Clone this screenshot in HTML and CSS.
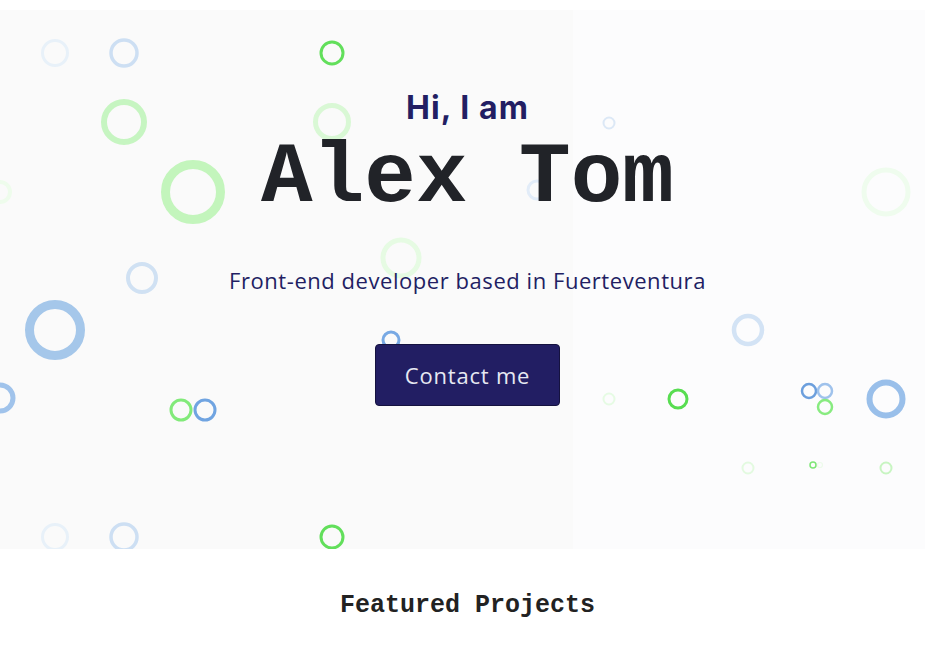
FILE: index.html
```html
<!DOCTYPE html>
<html lang="en">
<head>
<meta charset="utf-8">
<title>Alex Tom</title>
<link rel="stylesheet" href="styles.css">
</head>
<body>
<header class="hero">
  <svg class="bubbles" width="925" height="539" viewBox="0 10 925 539" aria-hidden="true">
    <g fill="none">
      <circle cx="55" cy="53" r="12.5" stroke="#e8f1f9" stroke-width="3"/>
      <circle cx="124" cy="53" r="13" stroke="#cddff3" stroke-width="3.5"/>
      <circle cx="332" cy="53" r="11" stroke="#62df5b" stroke-width="3"/>
      <circle cx="124" cy="122" r="20" stroke="#c6f5c1" stroke-width="6"/>
      <circle cx="332" cy="122" r="16.5" stroke="#d9f8d5" stroke-width="5"/>
      <circle cx="609" cy="123" r="5.5" stroke="#dce8f6" stroke-width="2"/>
      <circle cx="193" cy="192" r="27.5" stroke="#c3f5bc" stroke-width="9"/>
      <circle cx="0" cy="192" r="10" stroke="#eefcec" stroke-width="4"/>
      <circle cx="537" cy="190" r="9" stroke="#e2ecf8" stroke-width="3"/>
      <circle cx="886" cy="192" r="22" stroke="#effcee" stroke-width="5"/>
      <circle cx="401" cy="258" r="18" stroke="#e6fbe3" stroke-width="5"/>
      <circle cx="142" cy="278" r="14" stroke="#d0e1f3" stroke-width="4"/>
      <circle cx="55" cy="330" r="25.5" stroke="#a5c7ea" stroke-width="9"/>
      <circle cx="748" cy="330" r="14" stroke="#d3e3f5" stroke-width="4.5"/>
      <circle cx="391" cy="340" r="8" stroke="#78a9e4" stroke-width="3"/>
      <circle cx="0" cy="398" r="13" stroke="#a0c3eb" stroke-width="5"/>
      <circle cx="181" cy="410" r="10" stroke="#82ea7a" stroke-width="3"/>
      <circle cx="205" cy="410" r="10" stroke="#70a4e1" stroke-width="3"/>
      <circle cx="609" cy="399" r="5.5" stroke="#e6fbe4" stroke-width="2"/>
      <circle cx="678" cy="399" r="9" stroke="#58dd51" stroke-width="3"/>
      <circle cx="809" cy="391" r="7" stroke="#6c9fdd" stroke-width="2.5"/>
      <circle cx="825" cy="391" r="7" stroke="#9fc2ec" stroke-width="2.5"/>
      <circle cx="825" cy="407" r="7" stroke="#88eb80" stroke-width="2.5"/>
      <circle cx="886" cy="399" r="16.5" stroke="#99bfea" stroke-width="6"/>
      <circle cx="748" cy="468" r="5.5" stroke="#e3fae0" stroke-width="2"/>
      <circle cx="813" cy="465" r="3" stroke="#7ee676" stroke-width="1.5"/>
      <circle cx="820" cy="465" r="2.5" stroke="#edfbeb" stroke-width="1.2"/>
      <circle cx="886" cy="468" r="5.5" stroke="#c8f5c2" stroke-width="2"/>
      <circle cx="55" cy="537" r="12.5" stroke="#e8f1f9" stroke-width="3"/>
      <circle cx="124" cy="537" r="13" stroke="#cddff3" stroke-width="3.5"/>
      <circle cx="332" cy="537" r="11" stroke="#62df5b" stroke-width="3"/>
    </g>
  </svg>
  <div class="hero-content">
    <p class="greeting">Hi, I am</p>
    <h1 class="name">Alex Tom</h1>
    <p class="tagline">Front-end developer based in Fuerteventura</p>
    <a class="contact-btn" href="#contact">Contact me</a>
  </div>
</header>
<main class="projects">
  <h2 class="section-title">Featured Projects</h2>
</main>
</body>
</html>
```
FILE: styles.css
```css
* { box-sizing: border-box; }
html, body { margin: 0; padding: 0; background: #ffffff; }
body { font-family: "Open Sans", "Noto Sans", sans-serif; }

.hero {
  position: relative;
  margin-top: 10px;
  height: 539px;
  overflow: hidden;
  background: linear-gradient(to right, #fafafa 0, #fafafa 573px, #fcfcfd 573px, #fcfcfd 100%);
}

.bubbles {
  position: absolute;
  left: 0;
  top: 0;
  pointer-events: none;
}

.hero-content {
  position: relative;
  display: flex;
  flex-direction: column;
  align-items: center;
  padding-left: 10px;
  padding-top: 78px;
}

.greeting {
  margin: 0;
  font-family: "Inter", "Noto Sans", sans-serif;
  font-weight: 700;
  font-size: 32px;
  line-height: 40px;
  letter-spacing: 1.1px;
  color: #221e63;
}

.name {
  margin: 0;
  font-family: "Courier New", "Nimbus Mono PS", "Nimbus Mono L", "FreeMono", "Courier 10 Pitch", Courier, "Liberation Mono", monospace;
  font-weight: 700;
  font-size: 86px;
  line-height: 100px;
  color: #212328;
}

.tagline {
  margin: 37px 0 0;
  font-family: "Open Sans", "Noto Sans", sans-serif;
  font-size: 22px;
  line-height: 30px;
  letter-spacing: 0.55px;
  color: #221e63;
}

.contact-btn {
  margin-top: 49px;
  display: inline-flex;
  align-items: center;
  justify-content: center;
  width: 185px;
  height: 62px;
  background: #221e63;
  border: 1px solid #15123f;
  border-radius: 4px;
  color: #e6e8f2;
  font-family: "Open Sans", "Noto Sans", sans-serif;
  font-size: 22px;
  letter-spacing: 0.8px;
  text-decoration: none;
}

.projects {
  display: flex;
  justify-content: center;
  padding-left: 10px;
}

.section-title {
  margin: 42px 0 0;
  font-family: "Courier New", "Nimbus Mono PS", "Nimbus Mono L", "FreeMono", "Courier 10 Pitch", Courier, "Liberation Mono", monospace;
  font-weight: 700;
  font-size: 25px;
  line-height: 30px;
  color: #222222;
}
```
